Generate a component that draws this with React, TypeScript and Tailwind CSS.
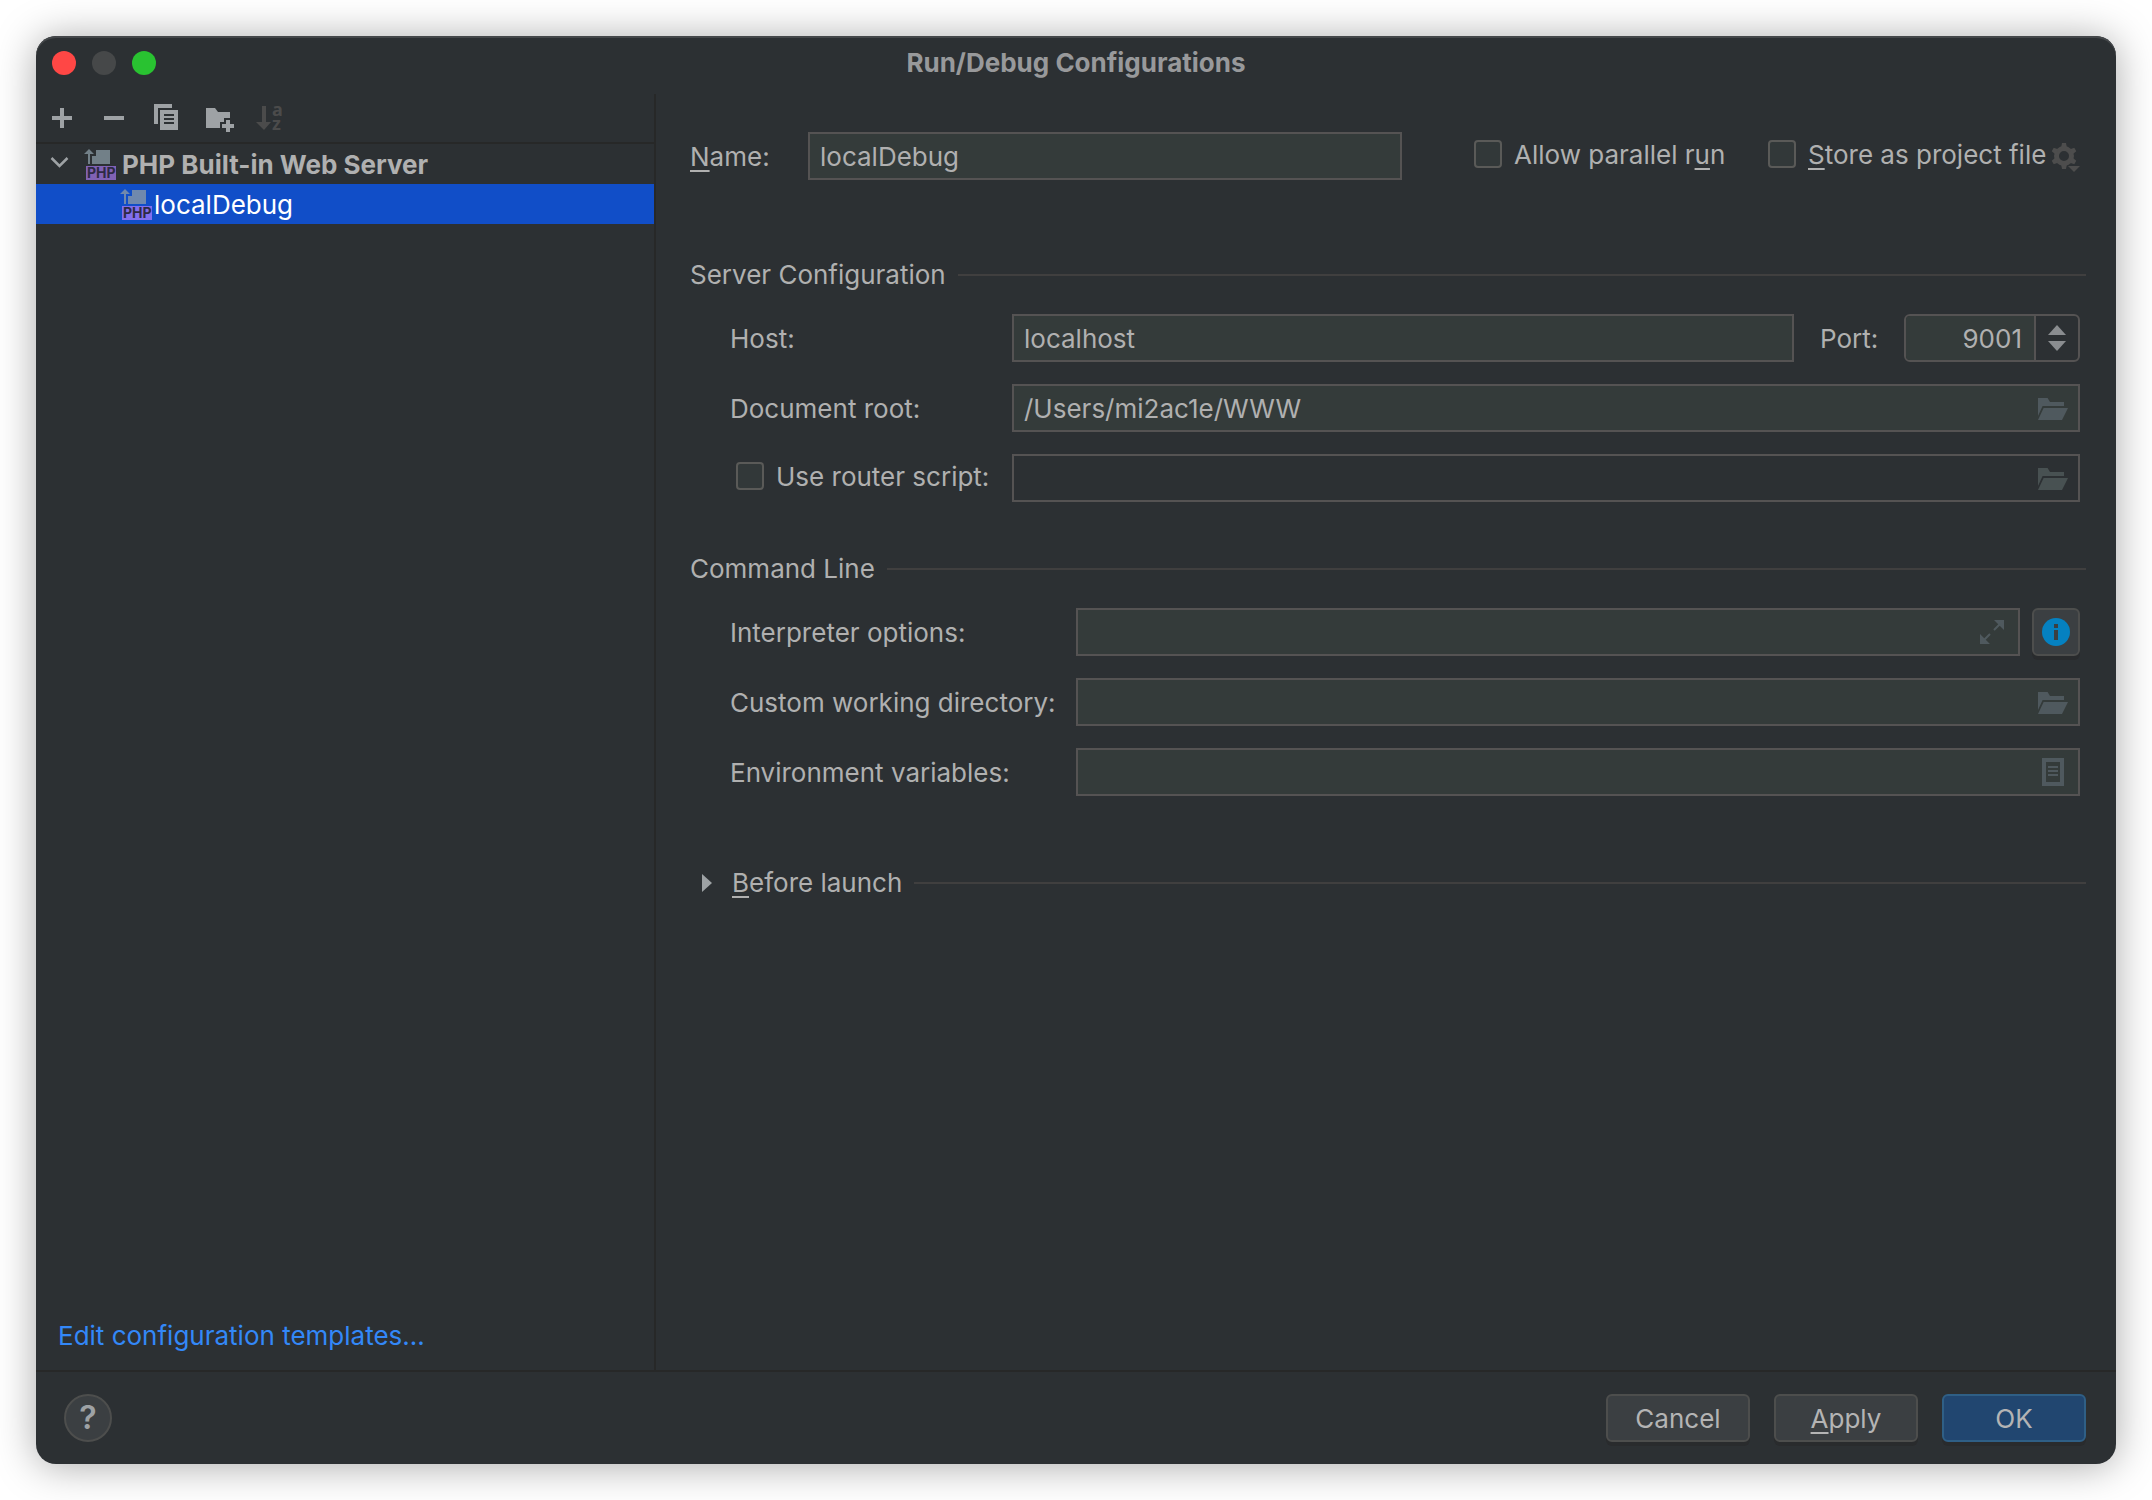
import { useState } from 'react';
import type { InputHTMLAttributes, ReactNode } from 'react';

const BUTTON =
  'h-12 rounded-md border-2 pt-0.5 text-[#b4b4b4] shadow-[0_4px_0_#292b2d]';

function PlusIcon() {
  return (
    <svg viewBox="0 0 16 16" className="size-8" fill="#9ea2a5" aria-hidden>
      <path d="M7 3h2v4h4v2H9v4H7V9H3V7h4z" />
    </svg>
  );
}

function MinusIcon() {
  return (
    <svg viewBox="0 0 16 16" className="size-8" fill="#9ea2a5" aria-hidden>
      <path d="M3 7h10v2H3z" />
    </svg>
  );
}

function CopyIcon() {
  return (
    <svg viewBox="0 0 16 16" className="size-8" fill="#9ea2a5" aria-hidden>
      <path d="M2 1h9v2H4v8H2z" />
      <path
        fillRule="evenodd"
        d="M5 4h9v10H5zM7 6v1h5V6zM7 8v1h5V8zM7 10v1h5v-1z"
      />
    </svg>
  );
}

function FolderAddIcon() {
  return (
    <svg viewBox="0 0 16 16" className="size-8" fill="#9ea2a5" aria-hidden>
      <path d="M2 3h4.5L8 5h6v3h-3v2H9v3H2z" />
      <path d="M12 9h2v2h2v2h-2v2h-2v-2h-2v-2h2z" />
    </svg>
  );
}

function SortIcon() {
  return (
    <svg
      viewBox="0 0 32 32"
      className="size-8 overflow-visible"
      fill="#4b4b4b"
      aria-hidden
    >
      <path d="M8 4h4v16h5l-7 8-8-8h6z" />
      <text fontSize="18" fontWeight="700" fontFamily="Noto Sans">
        <tspan x="18" y="14">
          a
        </tspan>
        <tspan x="18" y="28">
          z
        </tspan>
      </text>
    </svg>
  );
}

function PhpServerIcon({ selected = false }: { selected?: boolean }) {
  return (
    <svg viewBox="0 0 32 32" className="size-8 shrink-0" aria-hidden>
      <g fill={selected ? '#7089ad' : '#728088'}>
        <path d="M12 2h14v14H8V8h4z" />
        <path d="M5 1l5 5H6v10H4V6H0z" />
      </g>
      <path d="M2 18h30v14H2z" fill={selected ? '#816fee' : '#8162b6'} />
      <text
        x="3"
        y="30"
        fontSize="14"
        fontWeight="700"
        fontFamily="Inter"
        fill="#2f2a45"
      >
        PHP
      </text>
    </svg>
  );
}

function GearIcon() {
  return (
    <svg viewBox="0 0 32 32" className="size-8" fill="#4d4d4d" aria-hidden>
      <circle cx="16" cy="16" r="7.5" fill="none" stroke="#4d4d4d" strokeWidth="5" />
      {[0, 60, 120, 180, 240, 300].map((angle) => (
        <path
          key={angle}
          d="M14 3h4l1 5h-6z"
          transform={`rotate(${angle} 16 16)`}
        />
      ))}
      <path d="M20 26h12l-6 6z" />
    </svg>
  );
}

function OpenFolderIcon({ disabled = false }: { disabled?: boolean }) {
  return (
    <svg
      viewBox="0 0 16 16"
      className="size-8"
      fill={disabled ? '#485152' : '#4f595e'}
      aria-hidden
    >
      <path d="M1 3h4.8L7 5h7v2H3.3L1 12z" />
      <path d="M3.8 8H16l-3 6H1z" />
    </svg>
  );
}

function ExpandIcon() {
  return (
    <svg viewBox="0 0 16 16" className="size-8" fill="#4f595e" aria-hidden>
      <path d="M9 2h5v5zM2 9v5h5z" />
      <path d="M12 4L9 7M4 12l3-3" stroke="#4f595e" />
    </svg>
  );
}

function ListIcon() {
  return (
    <svg viewBox="0 0 16 16" className="size-8" fill="#4f595e" aria-hidden>
      <path fillRule="evenodd" d="M3 1h11v14H3zM5 3v10h7V3z" />
      <path d="M6 5h5v1H6zM6 7h5v1H6zM6 9h5v1H6z" />
    </svg>
  );
}

function InfoIcon() {
  return (
    <svg viewBox="0 0 28 28" className="size-7" aria-hidden>
      <circle cx="14" cy="14" r="14" fill="#0581c1" />
      <path d="M12 6h4v4h-4zM12 12h4v10h-4z" fill="#3b3f42" />
    </svg>
  );
}

type TextFieldProps = InputHTMLAttributes<HTMLInputElement> & {
  action?: ReactNode;
  actionLabel?: string;
};

function TextField({ action, actionLabel, disabled, ...rest }: TextFieldProps) {
  return (
    <div
      className={
        disabled
          ? 'flex h-12 min-w-0 flex-1 items-center border-2 border-[#555353]'
          : 'flex h-12 min-w-0 flex-1 items-center border-2 border-[#555353] bg-[#343b3a]'
      }
    >
      <input
        type="text"
        disabled={disabled}
        className="h-full w-full min-w-0 bg-transparent px-2.5 outline-none"
        {...rest}
      />
      {action && (
        <button
          type="button"
          aria-label={actionLabel}
          disabled={disabled}
          className="mr-2.5 shrink-0"
        >
          {action}
        </button>
      )}
    </div>
  );
}

function CheckBox({ id, children }: { id: string; children: ReactNode }) {
  return (
    <div className="flex items-center gap-3 pb-1 whitespace-nowrap">
      <input
        id={id}
        type="checkbox"
        className="size-7 shrink-0 appearance-none rounded-sm border-2 border-[#5a5a58] bg-[#323839] checked:bg-[#0581c1]"
      />
      <label htmlFor={id} className="pt-0.5">
        {children}
      </label>
    </div>
  );
}

function Mnemonic({ children }: { children: ReactNode }) {
  return (
    <span className="underline decoration-2 underline-offset-4 [text-decoration-skip-ink:none]">
      {children}
    </span>
  );
}

function SectionTitle({ children }: { children: ReactNode }) {
  return (
    <div className="flex h-[30px] items-center gap-3">
      <h2 className="whitespace-nowrap">{children}</h2>
      <div className="h-0.5 flex-1 bg-[#403f3f]" />
    </div>
  );
}

export default function App() {
  const [name, setName] = useState('localDebug');
  const [host, setHost] = useState('localhost');
  const [port, setPort] = useState(9001);
  const [root, setRoot] = useState('/Users/mi2ac1e/WWW');

  return (
    <div className="flex min-h-screen bg-white p-9 font-['Inter',sans-serif] text-[26px] leading-8 text-[#b0b0b0]">
      <div className="flex min-w-0 flex-1 flex-col overflow-hidden rounded-[20px] bg-[#2c3033] shadow-[0_2px_40px_rgba(0,0,0,0.34),inset_0_2px_0_#44474a]">
        <header className="grid h-[58px] shrink-0 grid-cols-[1fr_auto_1fr] items-center px-4 pb-1">
          <div className="flex gap-4">
            <button type="button" aria-label="Close" className="size-6 rounded-full bg-[#ff4745]" />
            <button type="button" aria-label="Minimize" className="size-6 rounded-full bg-[#464849]" />
            <button type="button" aria-label="Zoom" className="size-6 rounded-full bg-[#29c231]" />
          </div>
          <h1 className="font-bold text-[#98999b]">Run/Debug Configurations</h1>
        </header>

        <div className="flex flex-1">
          <aside className="flex w-[620px] shrink-0 flex-col border-r-2 border-[#272828]">
            <div className="flex h-[50px] items-center gap-5 border-b-2 border-[#272828] px-2.5">
              <button type="button" aria-label="Add">
                <PlusIcon />
              </button>
              <button type="button" aria-label="Remove">
                <MinusIcon />
              </button>
              <button type="button" aria-label="Copy">
                <CopyIcon />
              </button>
              <button type="button" aria-label="New folder">
                <FolderAddIcon />
              </button>
              <button type="button" aria-label="Sort" disabled>
                <SortIcon />
              </button>
            </div>

            <ul>
              <li>
                <div className="flex h-10 items-center gap-1.5 pl-3 font-bold whitespace-nowrap">
                  <svg viewBox="0 0 24 24" className="mr-1.5 size-6" aria-hidden>
                    <path
                      d="M3.500 6l8 8 8-8"
                      fill="none"
                      stroke="#9ea2a5"
                      strokeWidth="2.5"
                    />
                  </svg>
                  <PhpServerIcon />
                  <span className="pt-0.5">PHP Built-in Web Server</span>
                </div>
                <ul>
                  <li className="flex h-10 items-center gap-0.5 bg-[#114ec8] pl-[84px] text-white">
                    <PhpServerIcon selected />
                    <span className="pt-0.5">localDebug</span>
                  </li>
                </ul>
              </li>
            </ul>

            <a href="#templates" className="mt-auto px-[22px] pb-[18px] text-[#3388f8]">
              Edit configuration templates...
            </a>
          </aside>

          <main className="min-w-0 flex-1 pt-[38px] pr-[30px] pl-[34px]">
            <div className="flex items-center pr-1.5">
              <label htmlFor="name" className="w-[118px] shrink-0 pt-0.5">
                <Mnemonic>N</Mnemonic>ame:
              </label>
              <TextField id="name" value={name} onChange={(e) => setName(e.target.value)} />
              <div className="ml-[72px] w-[294px] shrink-0">
                <CheckBox id="parallel">
                  Allow parallel r<Mnemonic>u</Mnemonic>n
                </CheckBox>
              </div>
              <div className="flex w-[312px] shrink-0 items-center justify-between">
                <CheckBox id="store">
                  <Mnemonic>S</Mnemonic>tore as project file
                </CheckBox>
                <button type="button" aria-label="Storage options" disabled>
                  <GearIcon />
                </button>
              </div>
            </div>

            <section className="mt-20">
              <SectionTitle>Server Configuration</SectionTitle>
              <div className="mt-6 flex flex-col gap-[22px] pr-1.5 pl-10">
                <div className="flex items-center">
                  <label htmlFor="host" className="w-[282px] shrink-0 pt-0.5">
                    Host:
                  </label>
                  <TextField id="host" value={host} onChange={(e) => setHost(e.target.value)} />
                  <label htmlFor="port" className="w-[110px] shrink-0 pt-0.5 pl-[26px]">
                    Port:
                  </label>
                  <div className="flex h-12 w-44 shrink-0 overflow-hidden rounded-md border-2 border-[#555353]">
                    <input
                      id="port"
                      type="text"
                      inputMode="numeric"
                      value={port}
                      onChange={(e) => setPort(Number(e.target.value) || 0)}
                      className="min-w-0 flex-1 bg-[#343b3a] px-3 pt-0.5 text-right outline-none"
                    />
                    <div className="flex w-[44px] flex-col items-center justify-center gap-1.5 border-l-2 border-[#555353]">
                      <button type="button" aria-label="Increase port" onClick={() => setPort(port + 1)}>
                        <svg viewBox="0 0 18 10" className="h-2.5 w-[18px]" fill="#8a8d90" aria-hidden>
                          <path d="M9 0l9 10H0z" />
                        </svg>
                      </button>
                      <button type="button" aria-label="Decrease port" onClick={() => setPort(port - 1)}>
                        <svg viewBox="0 0 18 10" className="h-2.5 w-[18px]" fill="#8a8d90" aria-hidden>
                          <path d="M9 10l9-10H0z" />
                        </svg>
                      </button>
                    </div>
                  </div>
                </div>
                <div className="flex items-center">
                  <label htmlFor="root" className="w-[282px] shrink-0 pt-0.5">
                    Document root:
                  </label>
                  <TextField
                    id="root"
                    value={root}
                    onChange={(e) => setRoot(e.target.value)}
                    action={<OpenFolderIcon />}
                    actionLabel="Browse document root"
                  />
                </div>
                <div className="flex items-center">
                  <div className="w-[282px] shrink-0 pl-1.5">
                    <CheckBox id="router">Use router script:</CheckBox>
                  </div>
                  <TextField
                    aria-label="Router script"
                    disabled
                    action={<OpenFolderIcon disabled />}
                    actionLabel="Browse router script"
                  />
                </div>
              </div>
            </section>

            <section className="mt-[52px]">
              <SectionTitle>Command Line</SectionTitle>
              <div className="mt-6 flex flex-col gap-[22px] pr-1.5 pl-10">
                <div className="flex items-center">
                  <label htmlFor="options" className="w-[346px] shrink-0 pt-0.5">
                    Interpreter options:
                  </label>
                  <TextField id="options" action={<ExpandIcon />} actionLabel="Expand" />
                  <button
                    type="button"
                    aria-label="Show options info"
                    className="ml-3 flex size-12 shrink-0 items-center justify-center rounded-md border-2 border-[#4d4e4d] bg-[#3b3f42] shadow-[0_4px_0_#292b2d]"
                  >
                    <InfoIcon />
                  </button>
                </div>
                <div className="flex items-center">
                  <label htmlFor="directory" className="w-[346px] shrink-0 pt-0.5">
                    Custom working directory:
                  </label>
                  <TextField id="directory" action={<OpenFolderIcon />} actionLabel="Browse directory" />
                </div>
                <div className="flex items-center">
                  <label htmlFor="environment" className="w-[346px] shrink-0 pt-0.5">
                    Environment variables:
                  </label>
                  <TextField id="environment" action={<ListIcon />} actionLabel="Edit variables" />
                </div>
              </div>
            </section>

            <section className="mt-[72px] pl-3">
              <SectionTitle>
                <button type="button" className="flex items-center gap-5">
                  <svg viewBox="0 0 10 18" className="h-[18px] w-2.5" fill="#9ea2a5" aria-hidden>
                    <path d="M0 0l10 9-10 9z" />
                  </svg>
                  <span>
                    <Mnemonic>B</Mnemonic>efore launch
                  </span>
                </button>
              </SectionTitle>
            </section>
          </main>
        </div>

        <footer className="flex h-[94px] shrink-0 items-center gap-6 border-t-2 border-[#272828] pr-[30px] pl-7">
          <button
            type="button"
            aria-label="Help"
            className="mr-auto size-12 rounded-full border-2 border-[#4d4e4d] bg-[#3b3f42] text-[32px] font-semibold text-[#9ea2a5]"
          >
            ?
          </button>
          <button type="button" className={`${BUTTON} w-36 border-[#4d4e4d] bg-[#3b3f42]`}>
            Cancel
          </button>
          <button type="button" className={`${BUTTON} w-36 border-[#4d4e4d] bg-[#3b3f42]`}>
            <Mnemonic>A</Mnemonic>pply
          </button>
          <button type="button" className={`${BUTTON} w-36 border-[#2f5f86] bg-[#214670]`}>
            OK
          </button>
        </footer>
      </div>
    </div>
  );
}
